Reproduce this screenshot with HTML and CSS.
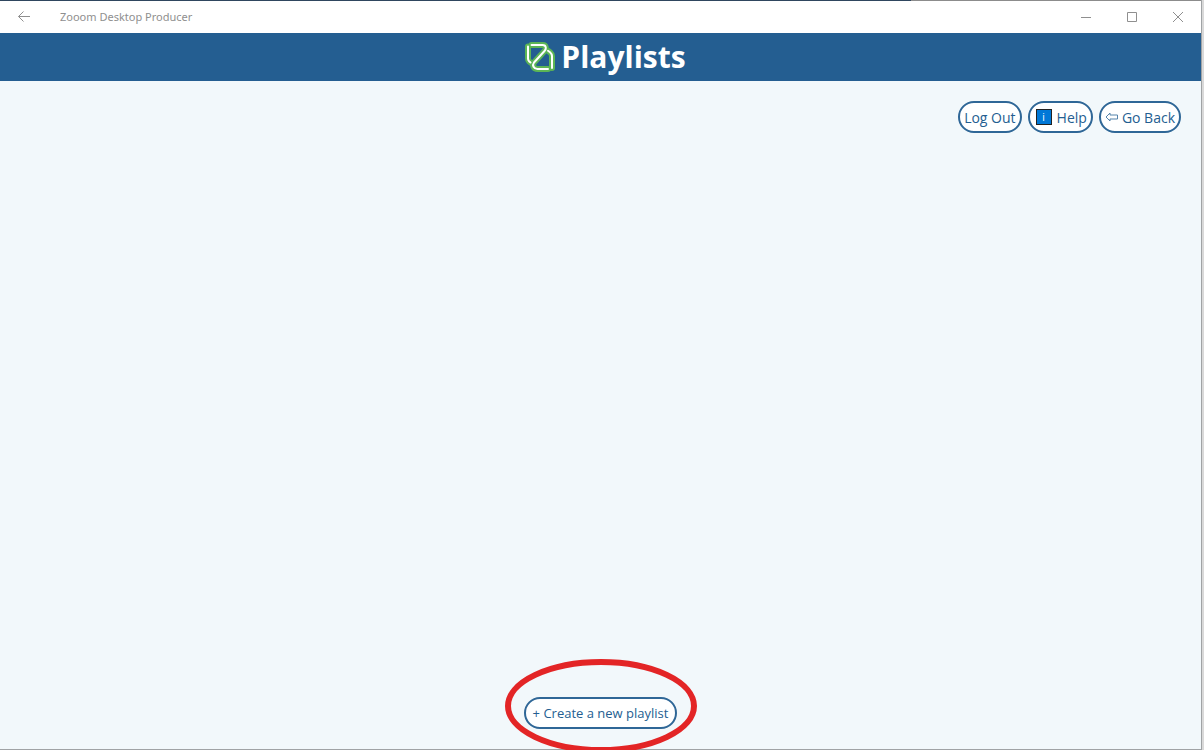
FILE: index.html
```html
<!DOCTYPE html>
<html lang="en">
<head>
<meta charset="utf-8">
<title>Zooom Desktop Producer</title>
<link rel="stylesheet" href="styles.css">
</head>
<body>
<div class="window">
  <div class="titlebar">
    <button class="caption-btn" type="button" aria-label="Back">
      <svg width="14" height="12" viewBox="0 0 14 12"><path d="M14 5.500H2.500M7.500.500l-5 5 5 5"/></svg>
    </button>
    <span class="app-name">Zooom Desktop Producer</span>
    <button class="caption-btn" type="button" aria-label="Minimize">
      <svg width="12" height="12" viewBox="0 0 12 12"><path d="M1 6.500h10"/></svg>
    </button>
    <button class="caption-btn" type="button" aria-label="Maximize">
      <svg width="12" height="12" viewBox="0 0 12 12"><path d="M1.500 1.500h9v9h-9z"/></svg>
    </button>
    <button class="caption-btn" type="button" aria-label="Close">
      <svg width="12" height="12" viewBox="0 0 12 12"><path d="M1 1l10 10M11 1 1 11"/></svg>
    </button>
  </div>
  <header class="header">
    <svg class="logo" width="30" height="30" viewBox="0 0 30 30" aria-hidden="true">
      <defs>
        <g id="mark">
          <path d="M3 4.500V16.500Q3 18 4 19.200L5.500 20.500"/>
          <path d="M6.500 3H17.500Q20.500 3 20.800 5.500 21 7.500 19.500 9L9 20.500Q7.500 22.500 8.500 24.800 9.700 27 12.500 27H23"/>
          <path d="M23 8.800 25 10.200Q27 12 27 14V26"/>
        </g>
      </defs>
      <use class="logo-outline" href="#mark"/>
      <use class="logo-line" href="#mark"/>
    </svg>
    <h1 class="title">Playlists</h1>
  </header>
  <main class="content">
    <nav class="toolbar">
      <button class="pill" type="button">Log Out</button>
      <button class="pill" type="button"><span class="info">i</span>Help</button>
      <button class="pill" type="button">
        <svg class="arrow" width="13" height="10" viewBox="0 0 13 10" aria-hidden="true"><path d="M5 1 1 5l4 4V7h7.500V3H5z"/></svg>Go Back
      </button>
    </nav>
    <div class="create">
      <button class="pill pill-create" type="button">+ Create a new playlist</button>
      <svg class="ring" width="192" height="94" viewBox="0 0 192 94" aria-hidden="true"><ellipse cx="96" cy="47" rx="93" ry="44"/></svg>
    </div>
  </main>
</div>
</body>
</html>
```
FILE: styles.css
```css
* {
  box-sizing: border-box;
}

body {
  margin: 0;
  background: #d9d9d9;
  font-family: "Open Sans", "Noto Sans", sans-serif;
  overflow: hidden;
}

.window {
  display: flex;
  flex-direction: column;
  height: 100vh;
  margin-right: 2px;
  border: solid #a0a3a5;
  border-width: 0 1px 1px 0;
  background: #f2f8fb;
}

.titlebar {
  display: flex;
  align-items: center;
  height: 33px;
  background: linear-gradient(90deg, #2f465f 911px, #8c8c8c 911px) top / 100% 1px no-repeat #fff;
}

.caption-btn {
  display: flex;
  align-items: center;
  justify-content: center;
  width: 46px;
  height: 32px;
  padding: 0;
  border: 0;
  background: none;
}

.caption-btn svg {
  fill: none;
  stroke: #8f8f8f;
}

.app-name {
  flex: 1;
  padding-left: 14px;
  color: #8f8f8f;
  font-family: "Noto Sans", "Open Sans", sans-serif;
  font-size: 11px;
}

.header {
  display: flex;
  align-items: center;
  justify-content: center;
  gap: 6px;
  height: 48px;
  padding-left: 10px;
  background: #245e91;
}

.logo {
  fill: none;
  stroke-linecap: round;
  stroke-linejoin: round;
}

.logo-outline {
  stroke: #5cb555;
  stroke-width: 6;
}

.logo-line {
  stroke: #fff;
  stroke-width: 2;
}

.title {
  margin: 0;
  color: #fff;
  font-size: 30px;
  line-height: 48px;
}

.content {
  flex: 1;
  display: flex;
  flex-direction: column;
  justify-content: space-between;
  padding: 20px;
}

.toolbar {
  display: flex;
  justify-content: flex-end;
  gap: 6px;
}

.pill {
  display: flex;
  align-items: center;
  height: 32px;
  padding: 0 4px;
  border: 2px solid #2f6797;
  border-radius: 16px;
  background: #fff;
  color: #245e91;
  font-family: inherit;
  font-size: 14px;
  white-space: nowrap;
}

.pill-create {
  padding: 0 7px;
  font-size: 13px;
}

.info {
  width: 16px;
  height: 16px;
  margin: 0 5px 0 2px;
  border: 1px solid #222;
  background: #0078d7;
  color: #fff;
  font-size: 10px;
  line-height: 14px;
}

.arrow {
  margin-right: 4px;
  fill: none;
  stroke: #5583ab;
}

.create {
  position: relative;
  align-self: center;
}

.ring {
  position: absolute;
  top: -38px;
  left: 50%;
  transform: translateX(-50%);
  fill: none;
  stroke: #e32526;
  stroke-width: 6;
  pointer-events: none;
}
```
